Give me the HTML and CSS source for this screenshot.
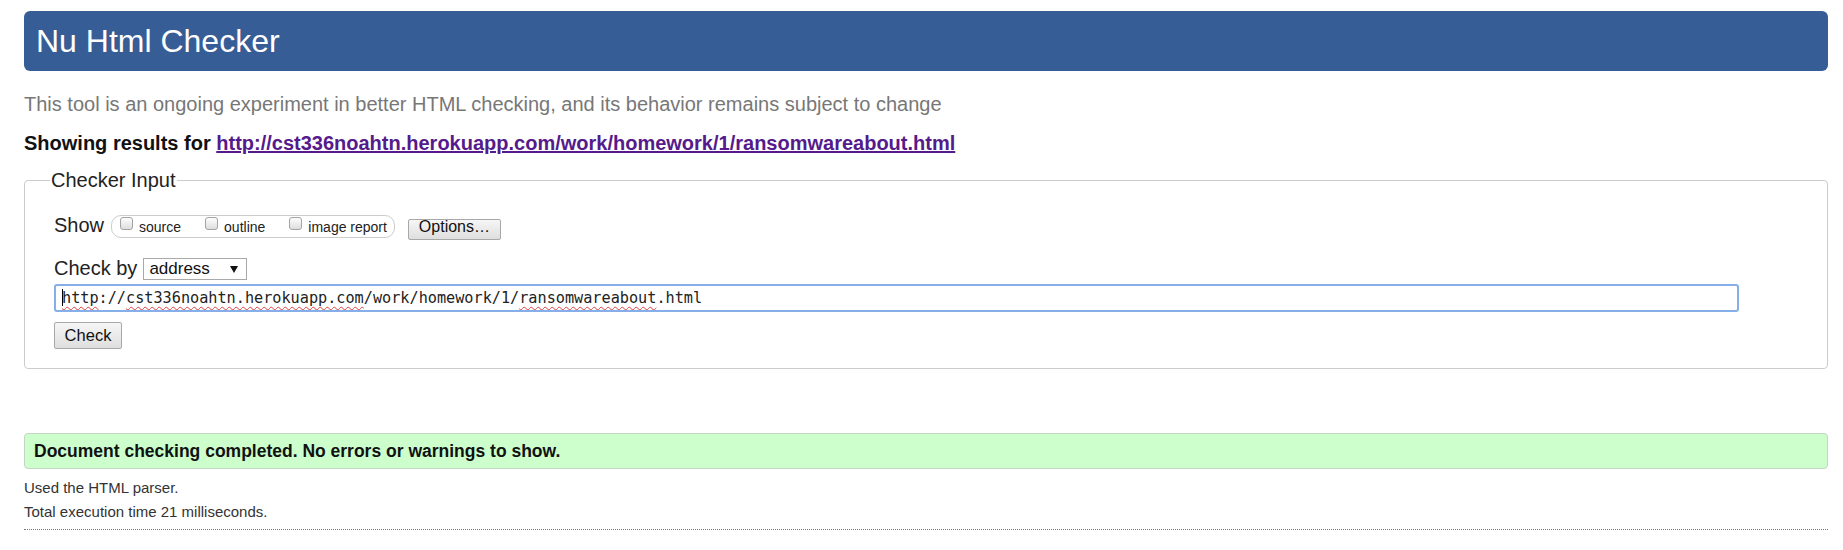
FILE: index.html
```html
<!DOCTYPE html>
<html lang="en">
<head>
<meta charset="utf-8">
<title>Showing results for http://cst336noahtn.herokuapp.com/work/homework/1/ransomwareabout.html - Nu Html Checker</title>
<link rel="stylesheet" href="styles.css">
</head>
<body>
<h1 class="banner">Nu Html Checker</h1>
<p class="tagline">This tool is an ongoing experiment in better HTML checking, and its behavior remains subject to change</p>
<p class="results-for">Showing results for <a href="#" class="doc-link">http://cst336noahtn.herokuapp.com/work/homework/1/ransomwareabout.html</a></p>
<form class="checker-form">
  <fieldset class="checker-input">
    <legend class="checker-legend">Checker Input</legend>
    <div class="row show-row">
      <span class="row-label">Show</span>
      <div class="show-options">
        <label class="opt"><input type="checkbox" class="box"><span class="opt-text">source</span></label>
        <label class="opt"><input type="checkbox" class="box"><span class="opt-text">outline</span></label>
        <label class="opt"><input type="checkbox" class="box"><span class="opt-text">image report</span></label>
      </div>
      <button type="button" class="btn btn-options">Options…</button>
    </div>
    <div class="row checkby-row">
      <span class="row-label">Check by</span>
      <div class="select">address<span class="arrow"></span></div>
    </div>
    <div class="url-field"><span class="caret"></span><span class="sp">http</span>://<span class="sp">cst336noahtn.herokuapp.com</span>/work/homework/1/<span class="sp">ransomwareabout</span>.html</div>
    <button type="button" class="btn btn-check">Check</button>
  </fieldset>
</form>
<div class="success">Document checking completed. No errors or warnings to show.</div>
<p class="meta">Used the HTML parser.</p>
<p class="meta">Total execution time 21 milliseconds.</p>
<hr class="dotted">
</body>
</html>
```
FILE: styles.css
```css
html, body {
  background: #fff;
}
body {
  margin: 0;
  padding: 11px 15px 0 24px;
  font-family: "Liberation Sans", Arial, sans-serif;
  color: #222;
}
.banner {
  margin: 0;
  height: 60px;
  line-height: 60px;
  padding: 0 0 0 12px;
  background: #365d95;
  color: #fff;
  font-size: 32px;
  font-weight: normal;
  border-radius: 6px;
}
.tagline {
  margin: 21px 0 0;
  font-size: 20px;
  line-height: 24px;
  color: #777;
}
.results-for {
  margin: 15px 0 0;
  font-size: 20px;
  line-height: 24px;
  font-weight: bold;
  color: #111;
}
.doc-link {
  color: #551a8b;
}
.checker-form {
  margin: 14px 0 0;
}
.checker-input {
  margin: 0;
  padding: 21px 88px 19px 29px;
  border: 1px solid #ccc;
  border-radius: 4px;
}
.checker-legend {
  margin-left: -4px;
  padding: 0 1px;
  font-size: 20px;
  line-height: 23px;
  color: #222;
}
.row {
  display: flex;
  align-items: flex-start;
}
.show-row {
  height: 28px;
}
.row-label {
  font-size: 20px;
  line-height: 23px;
}
.show-row .row-label {
  margin-top: 1px;
}
.show-options {
  display: flex;
  align-items: flex-start;
  gap: 24px;
  box-sizing: border-box;
  height: 23px;
  margin: 2px 0 0 7px;
  padding: 0 7px 0 8px;
  border: 1px solid #ccc;
  border-radius: 10px;
}
.opt {
  display: flex;
  align-items: flex-start;
  gap: 6px;
  font-size: 14px;
}
.box {
  appearance: none;
  -webkit-appearance: none;
  box-sizing: border-box;
  width: 13px;
  height: 13px;
  margin: 1px 0 0;
  border: 1px solid #a3a3a3;
  border-radius: 3px;
  background: linear-gradient(#fdfdfd, #dedede);
}
.opt-text {
  margin-top: 3px;
  line-height: 16px;
}
.btn {
  box-sizing: border-box;
  font-family: "Liberation Sans", Arial, sans-serif;
  color: #111;
  border: 1px solid #a8a8a8;
  border-radius: 2px;
  background: linear-gradient(#f6f6f6, #dedede);
  padding: 0;
  cursor: pointer;
}
.btn-options {
  margin: 6px 0 0 13px;
  width: 93px;
  height: 21px;
  padding: 0 0 6px;
  font-size: 16px;
  line-height: 13px;
}
.checkby-row {
  margin-top: 16px;
  height: 24px;
}
.select {
  display: flex;
  align-items: center;
  justify-content: space-between;
  box-sizing: border-box;
  width: 104px;
  height: 22px;
  margin: 1px 0 0 6px;
  padding: 0 8px 0 5px;
  border: 1px solid #a9a9a9;
  background: #fff;
  font-size: 17px;
  color: #111;
}
.arrow {
  width: 0;
  height: 0;
  border-left: 4px solid transparent;
  border-right: 4px solid transparent;
  border-top: 7px solid #111;
  margin-top: 1px;
}
.url-field {
  box-sizing: border-box;
  margin-top: 3px;
  height: 28px;
  padding: 0 6px;
  border: 2px solid #86aee8;
  border-radius: 3px;
  font-family: "DejaVu Sans Mono", "Liberation Mono", monospace;
  font-size: 15.2px;
  line-height: 24px;
  color: #222;
  white-space: nowrap;
  overflow: hidden;
}
.caret {
  display: inline-block;
  width: 1px;
  height: 17px;
  margin-right: -1px;
  vertical-align: -3px;
  background: #000;
}
.sp {
  text-decoration: underline wavy #e0403a;
  text-decoration-thickness: 1px;
  text-underline-offset: 3px;
  text-decoration-skip-ink: none;
}
.btn-check {
  display: block;
  margin-top: 10px;
  width: 68px;
  height: 27px;
  padding: 0 0 2px;
  font-size: 16.5px;
  line-height: 22px;
}
.success {
  margin-top: 64px;
  padding: 0 0 0 9px;
  height: 36px;
  box-sizing: border-box;
  line-height: 34px;
  border: 1px solid #c3d6c3;
  border-radius: 4px;
  background: #ccffcc;
  font-size: 17.5px;
  font-weight: bold;
  color: #111;
}
.meta {
  margin: 0;
  font-size: 15px;
  line-height: 24.3px;
  color: #333;
}
.success + .meta {
  margin-top: 7px;
}
.dotted {
  margin: 4px 0 0;
  height: 0;
  border: 0;
  border-top: 1px dotted #777;
}
```
